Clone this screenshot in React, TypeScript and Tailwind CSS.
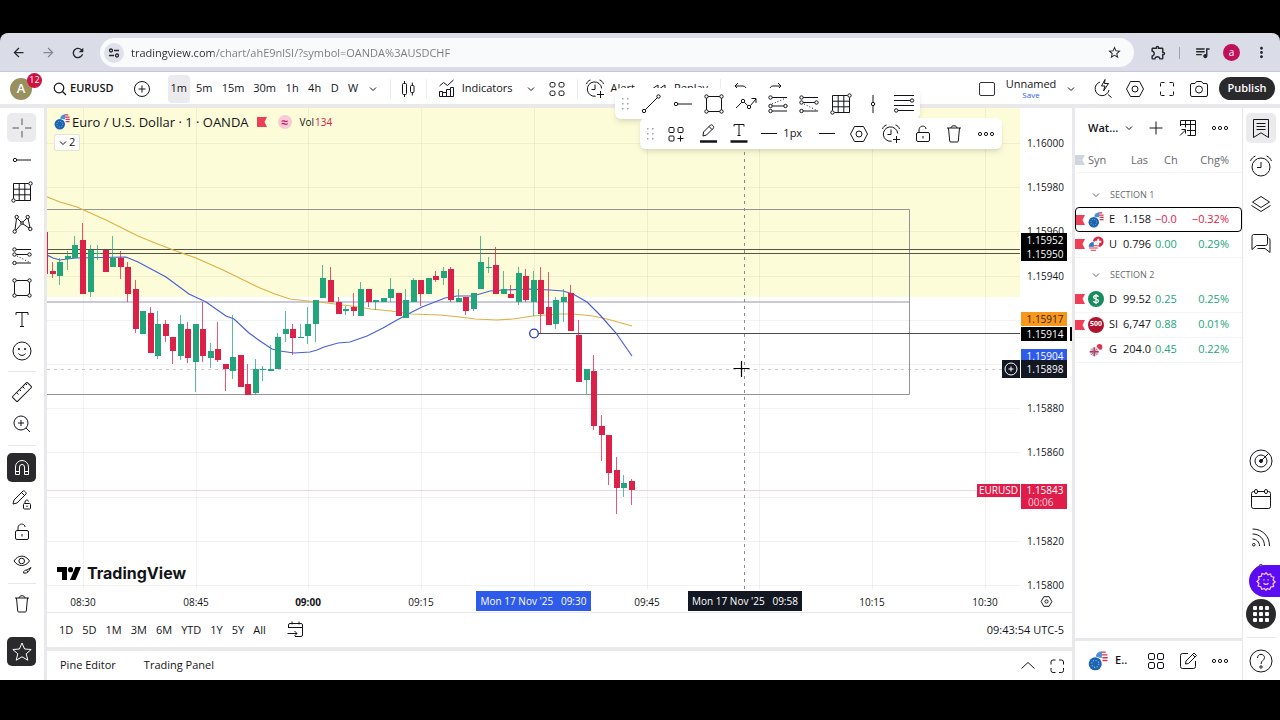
import type { ReactNode } from "react";
import clsx from "clsx";
import {
  MdArrowBack,
  MdArrowForward,
  MdMoreVert,
  MdOutlineExtension,
  MdQueueMusic,
  MdRefresh,
  MdStarOutline,
} from "react-icons/md";

/* ---------- icons ---------- */

const Icon = ({
  className = "h-7 w-7",
  children,
}: {
  className?: string;
  children: ReactNode;
}) => (
  <svg
    viewBox="0 0 28 28"
    fill="none"
    stroke="currentColor"
    strokeWidth="1"
    className={clsx("shrink-0", className)}
    aria-hidden="true"
  >
    {children}
  </svg>
);

const CrossIcon = () => (
  <Icon>
    <path d="M14 4.5V11M14 17v6.5M4.5 14H11M17 14h6.5" />
  </Icon>
);

const HLineIcon = () => (
  <Icon>
    <circle cx="7" cy="14" r="1.7" />
    <path d="M8.7 14H23" />
  </Icon>
);

const TrendIcon = () => (
  <Icon>
    <circle cx="7" cy="21" r="1.7" />
    <circle cx="21.5" cy="6.5" r="1.7" />
    <path d="M8.2 19.8 20.3 7.7" />
  </Icon>
);

const GridBoxIcon = () => (
  <Icon>
    <path d="M5.5 20.5v-15h15M22.5 7.5v15h-15M5.5 11.2h17M5.5 16.8h17M11.2 5.5v17M16.8 5.5v17" />
    <circle cx="22.5" cy="5.5" r="1.7" />
    <circle cx="5.5" cy="22.5" r="1.7" />
  </Icon>
);

const PatternIcon = () => (
  <Icon>
    <circle cx="6.7" cy="21.5" r="1.7" />
    <circle cx="8.7" cy="7" r="1.7" />
    <circle cx="19.7" cy="7" r="1.7" />
    <circle cx="22.3" cy="19" r="1.7" />
    <circle cx="14" cy="13" r="1.3" />
    <path d="M7 19.8 8.5 8.7M9.5 8.5 13 12M15 14l6 4M8 20.2l5.2-6M14.8 12l4-3.7M20.1 8.7l1.8 8.6" />
  </Icon>
);

const ParallelIcon = () => (
  <Icon>
    <circle cx="6.5" cy="7.5" r="1.7" />
    <circle cx="6.5" cy="12.5" r="1.7" />
    <circle cx="21.5" cy="12.5" r="1.7" />
    <circle cx="6.5" cy="21" r="1.7" />
    <path d="M8.2 7.5H23M8.2 12.5h11.6M8.2 21H23" />
    <path d="m9 14 12 6" strokeDasharray="1 2" />
  </Icon>
);

const ChannelIcon = () => (
  <Icon>
    <circle cx="6.5" cy="7.5" r="1.7" />
    <circle cx="6.5" cy="16" r="1.7" />
    <circle cx="21.5" cy="16" r="1.7" />
    <circle cx="6.5" cy="21" r="1.7" />
    <path d="M8.2 7.5H23M8.2 16h11.6M8.2 21H23" />
    <path d="m8 14 14-6" strokeDasharray="1 2" />
  </Icon>
);

const RectIcon = () => (
  <Icon>
    <path d="M8.2 6.5h11.6M8.2 21.5h11.6M6.5 8.2v11.6M21.5 8.2v11.6" />
    <circle cx="6.5" cy="6.5" r="1.7" />
    <circle cx="21.5" cy="6.5" r="1.7" />
    <circle cx="6.5" cy="21.5" r="1.7" />
    <circle cx="21.5" cy="21.5" r="1.7" />
  </Icon>
);

const TextIcon = () => (
  <Icon>
    <path d="M8 9V6.5h12V9M14 6.500v14M12 20.500h4" />
  </Icon>
);

const SmileIcon = () => (
  <Icon>
    <circle cx="14" cy="13" r="9" />
    <circle cx="11" cy="11" r="1" fill="currentColor" stroke="none" />
    <circle cx="17" cy="11" r="1" fill="currentColor" stroke="none" />
    <path d="M10.5 15.5c1.5 2.5 5.5 2.5 7 0" />
  </Icon>
);

const RulerIcon = () => (
  <Icon>
    <rect x="3.5" y="10.5" width="21" height="7" rx="1" transform="rotate(-45 14 14)" />
    <path d="m8.5 14.5 2 2M11.5 11.5l1.5 1.5M14.5 8.5l2 2M17.5 5.5l1.5 1.5" />
  </Icon>
);

const ZoomIcon = () => (
  <Icon>
    <circle cx="13" cy="13" r="7" />
    <path d="m18 18 4 4M13 10v6M10 13h6" />
  </Icon>
);

const MagnetIcon = () => (
  <Icon>
    <path d="M7.5 20.5V13a6.5 6.5 0 0 1 13 0v7.5h-4V13a2.5 2.5 0 0 0-5 0v7.5zM7.5 17.5h4M16.5 17.5h4" />
  </Icon>
);

const PencilLockIcon = () => (
  <Icon>
    <path d="m5 18 1-4 9-9c1-1 4 2 3 3l-9 9zM13.5 6.5l3 3" />
    <rect x="15.5" y="17.5" width="7" height="5.5" rx="1" />
    <path d="M17 17.5V16c0-2.5 3.5-2.5 3.5-.5M19 19.5v1.5" />
  </Icon>
);

const LockIcon = () => (
  <Icon>
    <rect x="7.5" y="12.5" width="13" height="9" rx="1.5" />
    <path d="M10 12.5V10c0-5 7-5 7-1M14 16v2.5" />
  </Icon>
);

const EyeIcon = () => (
  <Icon>
    <path d="M6 11c4-6.5 11.5-6.5 15.5 0-4 6-11.5 6-15.5 0z" />
    <circle cx="13.7" cy="11" r="2.8" />
    <path d="M15.5 23c0-2.5 2-3 3.500-3l4-2.500-2.500 4c-1 1.500-3 1.800-5 1.500zM18.500 20.500l1.500 1.500" />
  </Icon>
);

const TrashIcon = () => (
  <Icon>
    <path d="M7 8h14M11 8c0-3 6-3 6 0M8.5 8l1.2 13c0 .6.5 1 1 1h6.6c.5 0 1-.4 1-1L19.500 8" />
  </Icon>
);

const StarIcon = () => (
  <Icon>
    <path d="m14 5 2.600 6 6.600.5-5 4.300 1.600 6.400-5.800-3.400-5.800 3.400 1.600-6.400-5-4.300 6.600-.5z" />
  </Icon>
);

const ZigzagIcon = () => (
  <Icon>
    <circle cx="11" cy="11" r="1.7" />
    <circle cx="17" cy="17" r="1.7" />
    <path d="m4 18 5.8-5.7M12.3 12.2l3.5 3.5M18.3 15.7 24 9M19.5 8.5H24V13" />
  </Icon>
);

const VLineIcon = () => (
  <Icon>
    <circle cx="14" cy="14" r="1.7" />
    <path d="M14 5v7.3M14 15.7V23" />
  </Icon>
);

const LinesIcon = () => (
  <Icon>
    <path d="M4 5.5h20M4 10.5h16.3M4 15.5h20M8 20.5h16" />
    <circle cx="22" cy="10.5" r="1.7" />
    <circle cx="6.2" cy="20.5" r="1.7" />
  </Icon>
);

const TilesPlusIcon = () => (
  <Icon>
    <rect x="7" y="7.5" width="5" height="5" rx="1" />
    <rect x="16" y="7.5" width="5" height="5" rx="1" />
    <rect x="7" y="16" width="5" height="5" rx="1" />
    <path d="M18.5 15.5v6M15.5 18.5h6" />
  </Icon>
);

const TilesIcon = () => (
  <Icon>
    <rect x="7" y="7.5" width="5" height="4.5" rx="1.5" />
    <rect x="16" y="7.5" width="5" height="4.5" rx="1.5" />
    <rect x="7" y="16" width="5" height="4.5" rx="1.5" />
    <rect x="16" y="16" width="5" height="4.5" rx="1.5" />
  </Icon>
);

const PenColorIcon = () => (
  <Icon>
    <path d="m9 16 .5-4 7-7c1.5-1 4 1.5 3 3l-7 7zM15 6.5l3 3" />
    <path d="M6 21.5h17" strokeWidth="2.5" />
  </Icon>
);

const TextColorIcon = () => (
  <Icon>
    <path d="M9 6.5V4.5h10v2M14 4.5v11M12.5 15.5h3" />
    <path d="M5.5 21.5h17" strokeWidth="2.5" />
  </Icon>
);

const DashIcon = () => (
  <Icon>
    <path d="M6 13.5h16" />
  </Icon>
);

const HexIcon = () => (
  <Icon>
    <path d="M9.5 6.5h9l4 7.5-4 7.5h-9l-4-7.5z" />
    <circle cx="14" cy="14" r="3" />
  </Icon>
);

const AlertPlusIcon = () => (
  <Icon>
    <path d="M20.7 13.5a7.2 7.2 0 1 0-6 7.7M14 9.5v5h-3.5M5.5 9c.5-2 2-3.5 4-4M22.5 9c-.5-2-2-3.5-4-4M19.5 16v7M16 19.5h7" />
  </Icon>
);

const ClockIcon = () => (
  <Icon>
    <circle cx="14" cy="15" r="9" />
    <path d="M14 10v5.5h-4M3.5 9c1-2.5 2.5-4 5-5M24.5 9c-1-2.5-2.5-4-5-5" />
  </Icon>
);

const DotsIcon = () => (
  <Icon>
    <circle cx="8" cy="14" r="1.6" />
    <circle cx="14" cy="14" r="1.6" />
    <circle cx="20" cy="14" r="1.6" />
  </Icon>
);

const ChevronIcon = ({ className = "h-3 w-3" }: { className?: string }) => (
  <svg viewBox="0 0 12 12" fill="none" stroke="currentColor" className={className} aria-hidden="true">
    <path d="m3 4.5 3 3 3-3" />
  </svg>
);

const DragDots = () => (
  <svg viewBox="0 0 20 20" className="h-5 w-5 shrink-0 fill-gray-400" aria-hidden="true">
    {[5, 10, 15].map((y) => (
      <g key={y}>
        <rect x="7" y={y - 1} width="1.5" height="1.5" />
        <rect x="12" y={y - 1} width="1.5" height="1.5" />
      </g>
    ))}
  </svg>
);

const EuroUsd = ({ className = "h-4 w-4" }: { className?: string }) => (
  <svg viewBox="0 0 18 18" className={clsx("shrink-0", className)} aria-hidden="true">
    <circle cx="12" cy="6" r="5.5" fill="#fff" />
    <path d="M12 1h4M12 3.5h5.5M13 6h4.7M13 8.5h4.5" stroke="#d6314f" strokeWidth="1.3" />
    <path d="M7 5a5 5 0 0 1 5.5-4.5V6H7z" fill="#4a90d9" />
    <circle cx="6.5" cy="11.5" r="6.5" fill="#fff" />
    <circle cx="6.5" cy="11.5" r="5.9" fill="#1c63b0" />
    <circle cx="6.5" cy="11.5" r="3.2" fill="none" stroke="#8ec5ee" strokeWidth="1" strokeDasharray="1 1.5" />
  </svg>
);

const UsdChf = () => (
  <svg viewBox="0 0 18 18" className="h-4 w-4 shrink-0" aria-hidden="true">
    <circle cx="11.5" cy="6.5" r="6" fill="#e0243f" />
    <path d="M11.5 3v7M8 6.5h7" stroke="#fff" strokeWidth="2.2" />
    <circle cx="6" cy="12" r="6" fill="#fff" />
    <path d="M1 11h10M1 13.5h10M3 16h6" stroke="#d6314f" strokeWidth="1.3" />
    <path d="M.8 12A5.3 5.3 0 0 1 6.5 6.7V12z" fill="#2f78c9" />
  </svg>
);

const DollarBadge = () => (
  <svg viewBox="0 0 16 16" className="h-4 w-4 shrink-0" aria-hidden="true">
    <circle cx="8" cy="8" r="8" fill="#1a8a5f" />
    <path d="M10.5 5.8C10 4 5.7 4 5.7 6.2S10.5 7.6 10.5 10 6 12 5.5 10M8 3v10" fill="none" stroke="#fff" strokeWidth="1.3" />
  </svg>
);

const GbpJpy = () => (
  <svg viewBox="0 0 18 18" className="h-4 w-4 shrink-0" aria-hidden="true">
    <circle cx="13" cy="5.5" r="3.2" fill="#dc3553" />
    <circle cx="7" cy="11" r="6" fill="#fff" />
    <circle cx="7" cy="11" r="5" fill="#d5c9dc" />
    <path d="M2 11h10M7 6v10" stroke="#c92a48" strokeWidth="1.5" />
    <path d="m3.5 7.5 7 7M10.5 7.5l-7 7" stroke="#7a6f9a" strokeWidth=".8" />
  </svg>
);

const Flag = ({ className = "fill-[#ee3f56]" }: { className?: string }) => (
  <svg viewBox="0 0 10 10" className={clsx("h-[10px] w-[10px] shrink-0", className)} aria-hidden="true">
    <path d="M0 0h10L7.5 5l2.5 5H0z" />
  </svg>
);

/* ---------- chart data ---------- */

// [high, top, bottom, low, rising] for every minute from 08:25
const CANDLES: [number, number, number, number, 0 | 1][] = [
  [232, 232, 274, 274, 0],
  [262, 271, 274, 278, 0],
  [258, 262, 276, 285, 1],
  [251, 256, 259, 270, 1],
  [236, 245, 258, 258, 1],
  [223, 240, 294, 294, 0],
  [245, 250, 292, 297, 1],
  [245, 253, 254, 260, 1],
  [250, 250, 272, 272, 0],
  [236, 258, 267, 267, 1],
  [251, 258, 267, 279, 0],
  [262, 267, 294, 302, 0],
  [280, 289, 329, 333, 0],
  [311, 311, 334, 334, 1],
  [307, 313, 353, 353, 0],
  [311, 324, 356, 359, 1],
  [320, 324, 336, 342, 0],
  [337, 337, 351, 364, 0],
  [315, 324, 356, 360, 1],
  [322, 329, 358, 363, 0],
  [324, 324, 362, 392, 1],
  [302, 329, 356, 362, 0],
  [343, 351, 358, 368, 1],
  [322, 349, 360, 362, 0],
  [364, 364, 369, 391, 0],
  [315, 357, 371, 379, 1],
  [355, 355, 387, 387, 0],
  [364, 384, 395, 395, 0],
  [359, 369, 393, 395, 1],
  [366, 369, 370, 381, 1],
  [345, 369, 371, 371, 1],
  [333, 337, 369, 369, 1],
  [311, 329, 334, 342, 1],
  [324, 329, 338, 355, 0],
  [324, 337, 338, 338, 1],
  [307, 324, 336, 344, 1],
  [300, 300, 324, 342, 1],
  [265, 278, 298, 298, 1],
  [267, 280, 302, 302, 0],
  [297, 302, 314, 314, 0],
  [306, 309, 311, 315, 1],
  [293, 307, 311, 316, 0],
  [282, 289, 316, 316, 1],
  [289, 289, 302, 307, 0],
  [300, 300, 302, 310, 1],
  [298, 298, 302, 302, 1],
  [278, 289, 298, 302, 1],
  [293, 293, 316, 316, 0],
  [289, 300, 318, 318, 1],
  [278, 280, 302, 302, 1],
  [280, 280, 294, 306, 0],
  [278, 278, 294, 294, 1],
  [271, 276, 280, 282, 0],
  [267, 271, 278, 285, 1],
  [267, 269, 300, 302, 0],
  [289, 298, 302, 302, 1],
  [297, 297, 311, 315, 0],
  [293, 293, 309, 311, 1],
  [236, 262, 289, 289, 1],
  [257, 267, 268, 273, 1],
  [247, 265, 294, 294, 0],
  [271, 289, 294, 294, 1],
  [285, 294, 298, 298, 0],
  [267, 273, 302, 305, 1],
  [269, 276, 300, 302, 0],
  [271, 280, 302, 316, 1],
  [267, 280, 314, 333, 0],
  [272, 307, 325, 325, 0],
  [297, 300, 324, 329, 1],
  [289, 297, 302, 322, 1],
  [285, 293, 331, 331, 0],
  [320, 335, 382, 382, 0],
  [369, 369, 380, 394, 1],
  [355, 371, 426, 430, 0],
  [415, 426, 435, 461, 0],
  [435, 435, 473, 485, 0],
  [457, 470, 488, 514, 0],
  [475, 483, 488, 497, 1],
  [479, 481, 490, 505, 0],
];

const SLOW_MA =
  "45,196 60,202 77,207 106,220 138,236 155,243 176,251 196,258 223,270 260,288 275,294 290,299 308,301 327,303 351,306 371,309 391,311 411,314 440,315 460,317 475,319 497,320 513,319 533,316 560,314 573,314 593,316 607,319 632,326";
const FAST_MA =
  "45,254 53,258 60,260 67,259 76,258 126,257 138,262 153,270 166,277 189,294 206,302 226,316 234,319 249,333 260,341 272,349 280,351 294,353 310,352 317,350 324,347 338,343 350,342 367,336 383,328 397,320 412,312 422,307 445,298 457,296 473,296 490,291 503,290 530,289 550,290 563,291 573,294 587,302 600,315 616,333 632,356";

const LEFT = 47;
const TOP = 108;
const minuteX = (m: number) => 83 - LEFT + m * 7.515;
const priceY = (p: number) => Math.round(143 - TOP + (1.16 - p) * 221000);

const QUARTERS = [0, 15, 30, 45, 60, 75, 90, 105, 120];
const PRICES = [1.16, 1.1598, 1.1596, 1.1594, 1.1592, 1.159, 1.1588, 1.1586, 1.1584, 1.1582, 1.158];
const PRICE_LABELS = [1.16, 1.1598, 1.1596, 1.1594, 1.1588, 1.1586, 1.1582, 1.158];

const PRICE_TAGS = [
  { text: "1.15952", top: 125, className: "bg-black text-white" },
  { text: "1.15950", top: 139, className: "bg-black text-white" },
  { text: "1.15917", top: 204, className: "bg-[#f7981c] text-[#3b2200]" },
  { text: "1.15914", top: 219, className: "bg-black text-white" },
  { text: "1.15904", top: 241, className: "bg-[#2f5bea] text-white" },
];

const TIMES = [
  { m: 0, text: "08:30" },
  { m: 15, text: "08:45" },
  { m: 30, text: "09:00", bold: true },
  { m: 45, text: "09:15" },
  { m: 75, text: "09:45" },
  { m: 105, text: "10:15" },
  { m: 120, text: "10:30" },
];

/* ---------- pieces ---------- */

const BrowserBar = () => (
  <div className="flex h-[39px] shrink-0 items-center rounded-t-lg border-b border-[#c4c7d6] bg-[#dadde8] pt-px pr-[10px] pl-2 text-[#26272b]">
    <button aria-label="Back" className="flex w-5 justify-center"><MdArrowBack size={15} /></button>
    <button aria-label="Forward" className="ml-[10px] flex w-5 justify-center text-[#85878f]"><MdArrowForward size={15} /></button>
    <button aria-label="Reload" className="ml-[10px] flex w-5 justify-center"><MdRefresh size={16} /></button>
    <div className="ml-3 flex h-[29px] flex-1 items-center rounded-full bg-[#f8fafc] pr-3 pl-1">
      <button aria-label="Site information" className="flex h-5 w-5 items-center justify-center rounded-full bg-[#dfe2ea]">
        <svg viewBox="0 0 12 12" fill="none" stroke="currentColor" strokeWidth="1.3" className="h-3 w-3">
          <circle cx="3" cy="3.5" r="1.5" />
          <circle cx="9" cy="8.5" r="1.5" />
          <path d="M6 3.5h5M1 8.5h5" />
        </svg>
      </button>
      <input
        aria-label="Address"
        className="ml-[7px] h-5 flex-1 bg-[linear-gradient(to_right,#2a2b2f_83px,#77797f_83px)] bg-clip-text text-[11px] leading-5 text-transparent outline-none"
        defaultValue="tradingview.com/chart/ahE9nlSI/?symbol=OANDA%3AUSDCHF"
      />
      <button aria-label="Bookmark"><MdStarOutline size={15} /></button>
    </div>
    <div className="ml-4 flex items-center">
      <button aria-label="Extensions"><MdOutlineExtension size={17} /></button>
      <span className="ml-3 h-3 w-px bg-[#9fa3b3]" />
      <button aria-label="Media" className="ml-[14px]"><MdQueueMusic size={17} /></button>
      <button aria-label="Profile" className="ml-3 flex h-[17px] w-[17px] items-center justify-center rounded-full bg-[#c0105c] text-[10px] text-white">a</button>
      <button aria-label="Menu" className="ml-[13px]"><MdMoreVert size={17} /></button>
    </div>
  </div>
);

const INTERVALS = [
  { text: "1m", className: "w-[22px] rounded bg-[#ebebed] h-7" },
  { text: "5m", className: "w-[29px]" },
  { text: "15m", className: "w-[29px]" },
  { text: "30m", className: "w-[34px]" },
  { text: "1h", className: "w-[21px]" },
  { text: "4h", className: "w-6" },
  { text: "D", className: "w-4" },
  { text: "W", className: "w-[21px]" },
];

const Separator = () => <span className="h-5 w-px shrink-0 bg-[#ececee]" />;

const Header = () => (
  <header className="flex h-8 shrink-0 items-center bg-white pt-px text-[11px] font-medium">
    <button aria-label="Account" className="relative ml-[10px] flex h-[22px] w-[22px] items-center justify-center rounded-full bg-[#98905f] text-[13px] font-semibold text-white">
      A
      <span className="absolute -top-[5px] left-[17px] flex h-[15px] w-[15px] items-center justify-center rounded-full bg-[#d0103f] text-[9px] font-normal">12</span>
    </button>
    <button className="ml-[21px] flex items-center gap-[3px] font-semibold">
      <svg viewBox="0 0 14 14" fill="none" stroke="currentColor" strokeWidth="1.2" className="h-[14px] w-[14px]">
        <circle cx="6" cy="6" r="4.8" />
        <path d="m9.5 9.5 3.5 3.5" />
      </svg>
      EURUSD
    </button>
    <div className="flex flex-1 items-center">
      <button aria-label="Add symbol" className="ml-5 w-4">
        <svg viewBox="0 0 16 16" fill="none" stroke="currentColor" className="h-4 w-4">
          <circle cx="8" cy="8" r="7.5" />
          <path d="M8 4.5v7M4.5 8h7" />
        </svg>
      </button>
      <span className="ml-3"><Separator /></span>
      <div className="ml-[6px] flex items-center">
        {INTERVALS.map((i) => (
          <button key={i.text} className={clsx("flex items-center justify-center", i.className)}>{i.text}</button>
        ))}
        <button aria-label="More intervals" className="flex w-[18px] justify-center"><ChevronIcon /></button>
      </div>
      <span className="w-2" />
      <Separator />
      <button aria-label="Candles" className="flex w-[35px] justify-center">
        <Icon>
          <rect x="8.5" y="8.5" width="4" height="11" rx="1" />
          <rect x="16.5" y="10.5" width="3.5" height="7" rx="1" />
          <path d="M10.5 6v2.5M10.5 19.5V22M18.3 7.5v3M18.3 17.5v3" />
        </Icon>
      </button>
      <Separator />
      <button className="ml-[6px] flex items-center gap-px">
        <Icon>
          <path d="M6.5 21.5v-5h3v5zM9.5 21.5v-4h4v4zM13.5 21.5v-7h4v7zM17.5 21.5v-9h3v9zM6.5 11l4-3.5 4 3 6-5.5" />
        </Icon>
        Indicators
      </button>
      <button aria-label="Favorite indicators" className="ml-3"><ChevronIcon /></button>
      <button aria-label="Templates" className="ml-[6px]"><TilesIcon /></button>
      <span className="w-[6px]" />
      <Separator />
      <button className="ml-[3px] flex items-center gap-[2px]"><AlertPlusIcon />Alert</button>
      <button className="ml-[10px] flex items-center gap-px">
        <Icon>
          <path d="m13 10-6 4 6 4zM20 10l-6 4 6 4z" />
        </Icon>
        Replay
      </button>
      <span className="w-3" />
      <Separator />
      <button aria-label="Undo" className="ml-[6px]">
        <Icon><path d="m11 8-3 3 3 3M8 11h8c4 0 4 6 0 6" /></Icon>
      </button>
      <button aria-label="Redo" className="ml-[6px]">
        <Icon><path d="m17 8 3 3-3 3M20 11h-8c-4 0-4 6 0 6" /></Icon>
      </button>
    </div>
    <button aria-label="Layout" className="h-[14px] w-4 rounded-xs border border-[#333]" />
    <button className="ml-[10px] flex w-[52px] flex-col items-center">
      <span className="leading-3">Unnamed</span>
      <span className="text-[8px] leading-[10px] font-normal text-[#2f5bea]">Save</span>
    </button>
    <button aria-label="Layouts" className="ml-2"><ChevronIcon /></button>
    <div className="ml-3 flex gap-1">
      <button aria-label="Quick search">
        <Icon>
          <path d="M11 7a7 7 0 1 0 9 8M19 19.5l3.5 3M16 4.5 12.500 11H16l-1.500 5 5-7.500h-4z" />
        </Icon>
      </button>
      <button aria-label="Settings"><HexIcon /></button>
      <button aria-label="Fullscreen">
        <Icon><path d="M7.5 11.5v-3a1 1 0 0 1 1-1h3M16.5 7.5h3a1 1 0 0 1 1 1v3M20.5 16.5v3a1 1 0 0 1-1 1h-3M11.5 20.5h-3a1 1 0 0 1-1-1v-3" /></Icon>
      </button>
      <button aria-label="Snapshot">
        <Icon>
          <path d="M7 8.5h3l1.5-2h5l1.500 2h3a1.500 1.500 0 0 1 1.500 1.500v10a1.500 1.500 0 0 1-1.500 1.500H7A1.500 1.500 0 0 1 5.500 20V10A1.500 1.500 0 0 1 7 8.500z" />
          <circle cx="14" cy="14.5" r="3.5" />
        </Icon>
      </button>
    </div>
    <button className="mr-[5px] ml-[6px] h-[23px] w-14 rounded-full bg-[#2a2a2c] font-semibold text-white">Publish</button>
  </header>
);

const ToolButton = ({ label, dark, active, children }: { label: string; dark?: boolean; active?: boolean; children: ReactNode }) => (
  <button
    aria-label={label}
    className={clsx(
      "flex h-[29px] w-[29px] shrink-0 items-center justify-center rounded-[5px]",
      dark && "bg-[#2a2a2c] text-white",
      active && "bg-[#ebebed] text-[#55565a]",
    )}
  >
    {children}
  </button>
);

const DrawingTools = () => (
  <nav className="flex w-11 shrink-0 flex-col items-center bg-white pt-[5px] pr-px pb-[14px]">
    <div className="flex flex-col gap-[3px]">
      <ToolButton label="Cross" active><CrossIcon /></ToolButton>
      <ToolButton label="Horizontal ray"><HLineIcon /></ToolButton>
      <ToolButton label="Gann box"><GridBoxIcon /></ToolButton>
      <ToolButton label="Patterns"><PatternIcon /></ToolButton>
      <ToolButton label="Long position"><ParallelIcon /></ToolButton>
      <ToolButton label="Rectangle"><RectIcon /></ToolButton>
      <ToolButton label="Text"><TextIcon /></ToolButton>
      <ToolButton label="Icons"><SmileIcon /></ToolButton>
    </div>
    <span className="my-[5px] h-px w-7 shrink-0 bg-gray-200" />
    <div className="flex flex-col gap-[3px]">
      <ToolButton label="Measure"><RulerIcon /></ToolButton>
      <ToolButton label="Zoom in"><ZoomIcon /></ToolButton>
    </div>
    <span className="my-[7px] h-px w-7 shrink-0 bg-gray-200" />
    <div className="flex flex-col gap-[3px]">
      <ToolButton label="Magnet" dark><MagnetIcon /></ToolButton>
      <ToolButton label="Stay in drawing mode"><PencilLockIcon /></ToolButton>
      <ToolButton label="Lock drawings"><LockIcon /></ToolButton>
      <ToolButton label="Hide drawings"><EyeIcon /></ToolButton>
    </div>
    <span className="my-[5px] h-px w-7 shrink-0 bg-gray-200" />
    <ToolButton label="Remove"><TrashIcon /></ToolButton>
    <div className="mt-auto">
      <ToolButton label="Favorites" dark><StarIcon /></ToolButton>
    </div>
  </nav>
);

const Plot = () => (
  <svg className="absolute inset-0 h-full w-full" aria-label="EURUSD price chart">
    <rect width="100%" height="189" fill="#fcfcd8" />
    {QUARTERS.map((m) => (
      <path key={m} d={`M${Math.round(minuteX(m)) + 0.5} 0v482`} stroke="#000" strokeOpacity=".05" />
    ))}
    {PRICES.map((p) => (
      <line key={p} x1="0" x2="100%" y1={priceY(p) + 0.5} y2={priceY(p) + 0.5} stroke="#000" strokeOpacity=".05" />
    ))}
    <line x1="0" x2="100%" y1="382.5" y2="382.5" stroke="#e4d8dc" />
    <line x1="0" x2="100%" y1="261.5" y2="261.5" stroke="#cbcbce" strokeDasharray="3 4" />

    <path d="M0 101.5h862.5v185H0" fill="none" stroke="#949498" />
    <path d="M0 194h862" stroke="#b8b8c4" strokeWidth="1.5" />
    <line x1="0" x2="100%" y1="141.5" y2="141.5" stroke="#55554a" />
    <line x1="0" x2="100%" y1="145.5" y2="145.5" stroke="#55554a" />
    <line x1="487" x2="100%" y1="225.5" y2="225.5" stroke="#4a4a4a" />

    <g transform={`translate(${-LEFT} ${-TOP})`}>
      <polyline points={SLOW_MA} fill="none" stroke="#dfb044" strokeWidth="1.2" />
      <polyline points={FAST_MA} fill="none" stroke="#4a5fd8" strokeWidth="1.2" />
    </g>

    {CANDLES.map(([high, top, bottom, low, up], i) => {
      const x = Math.round(minuteX(i - 5));
      return (
        <g key={i} fill={up ? "#22a57b" : "#dc2148"}>
          <rect x={x - 1} y={high - TOP} width="1" height={low - high} opacity=".75" />
          <rect x={x - 3} y={top - TOP} width="6" height={Math.max(bottom - top, 1)} />
        </g>
      );
    })}

    <circle cx="487" cy="225.5" r="4.3" fill="#fff" stroke="#2b3cc4" strokeWidth="1.3" />
    <path d="M697.5 30v452" stroke="#8a8a8e" strokeDasharray="3 4" />
    <path d="M694.5 253v16M686.5 260.5h16" stroke="#000" strokeWidth="1.2" />
  </svg>
);

const ChartLegend = () => (
  <div className="relative flex flex-col items-start pt-[5px] pl-[7px]">
    <div className="flex items-center text-[13px] leading-[18px]">
      <EuroUsd />
      <span className="ml-[2px] font-medium">Euro / U.S. Dollar · 1 · OANDA</span>
      <span className="ml-2"><Flag /></span>
      <span className="ml-[11px] flex h-[14px] w-[14px] items-center justify-center rounded-full bg-[#f9c9d6] text-[13px] font-semibold text-[#c2185b]">≈</span>
      <span className="ml-2 text-[10px]">Vol<span className="ml-px text-[#dc2148]">134</span></span>
    </div>
    <button className="mt-[3px] flex h-[17px] items-center rounded-xs border border-[#e4e4cf] bg-white pr-1 pl-[2px] text-[11px]">
      <ChevronIcon /> 2
    </button>
  </div>
);

const PriceAxis = () => (
  <div className="relative w-[52px] shrink-0 bg-white text-[10px] leading-[14px]">
    {PRICE_LABELS.map((p) => (
      <span key={p} className="absolute left-0 w-[51px] text-center" style={{ top: priceY(p) - 7 }}>{p.toFixed(5)}</span>
    ))}
    {PRICE_TAGS.map((t) => (
      <span key={t.text} className={clsx("absolute left-px w-[46px] pl-[2px] text-center font-medium", t.className)} style={{ top: t.top }}>
        {t.text}
      </span>
    ))}
    <span className="absolute top-[219px] right-0 h-[14px] w-[2px] bg-black" />
    <span className="absolute top-[252px] left-px w-[46px] bg-[#131722] py-[2px] pl-[2px] text-center font-medium text-white">1.15898</span>
    <span className="absolute top-[376px] left-px flex w-[46px] flex-col items-center bg-[#e01d4a] pb-px leading-3 text-white">
      <span className="pl-[2px] font-medium">1.15843</span>
      <span className="w-full pl-[7px] text-[#ffd0da]">00:06</span>
    </span>
  </div>
);

const TimeAxis = () => (
  <div className="flex h-[23px] shrink-0 border-b border-[#e8e8ea] text-[10px] leading-5">
    <div className="relative flex-1 overflow-hidden">
      {TIMES.map((t) => (
        <span
          key={t.text}
          className={clsx("absolute top-[2px] w-10 -translate-x-1/2 text-center", t.bold && "font-bold")}
          style={{ left: Math.round(minuteX(t.m)) }}
        >
          {t.text}
        </span>
      ))}
      <span className="absolute top-px left-[429px] h-5 w-[115px] bg-[#2f5bea] text-center whitespace-pre text-white">Mon 17 Nov '25   09:30</span>
      <span className="absolute top-px left-[641px] h-5 w-[114px] bg-[#131722] text-center whitespace-pre text-white">Mon 17 Nov '25   09:58</span>
    </div>
    <button aria-label="Axis settings" className="flex w-[52px] items-center justify-center">
      <svg viewBox="0 0 28 28" fill="none" stroke="currentColor" strokeWidth="1.8" className="h-[15px] w-[15px]">
        <path d="M9 5h10l5 9-5 9H9l-5-9z" />
        <circle cx="14" cy="14" r="3" />
      </svg>
    </button>
  </div>
);

const RANGES = ["1D", "5D", "1M", "3M", "6M", "YTD", "1Y", "5Y", "All"];

const ChartPanel = () => (
  <section className="flex min-w-0 flex-1 flex-col gap-1">
    <div className="flex min-h-0 flex-1 flex-col bg-white">
      <div className="flex min-h-0 flex-1">
        <div className="relative flex-1 overflow-hidden">
          <Plot />
          <ChartLegend />
          <div className="absolute bottom-[7px] left-[10px] flex items-center gap-[6px] font-['Inter',sans-serif] text-[16px] leading-5 font-bold">
            <svg viewBox="0 0 24 13" className="h-[13px] w-6" aria-hidden="true">
              <path d="M0 0h10v13H5V5H0z" />
              <circle cx="13.5" cy="2.7" r="2.6" />
              <path d="M18.5 0H24l-5.5 13H13z" />
            </svg>
            TradingView
          </div>
          <button aria-label="Add order" className="absolute top-[252px] right-0 flex h-[18px] w-[18px] items-center justify-center bg-[#131722] text-white">
            <svg viewBox="0 0 14 14" fill="none" stroke="currentColor" className="h-[14px] w-[14px]">
              <circle cx="7" cy="7" r="6" />
              <path d="M7 4.5v5M4.5 7h5" />
            </svg>
          </button>
          <span className="absolute top-[376px] right-0 w-[43px] bg-[#e01d4a] text-center text-[10px] leading-[13px] text-white">EURUSD</span>
        </div>
        <PriceAxis />
      </div>
      <TimeAxis />
      <div className="flex h-[34px] shrink-0 items-center pr-2 text-[11px]">
        <div className="flex gap-[9px] pl-3">
          {RANGES.map((r) => (
            <button key={r}>{r}</button>
          ))}
        </div>
        <button aria-label="Go to" className="ml-4">
          <Icon>
            <path d="M6.5 12V9A1.5 1.5 0 0 1 8 7.5h11A1.5 1.5 0 0 1 20.5 9v10a1.5 1.5 0 0 1-1.5 1.5h-6M6.5 11.5h14M10 5.5v3M17 5.5v3M5.5 17.5H15M12.5 15l2.5 2.5-2.5 2.5" />
          </Icon>
        </button>
        <button className="ml-auto">09:43:54 UTC-5</button>
      </div>
    </div>
    <footer className="flex h-[29px] shrink-0 items-center bg-white pr-px text-[11px] font-medium">
      <button className="ml-[13px]">Pine Editor</button>
      <button className="ml-7">Trading Panel</button>
      <button aria-label="Open panel" className="ml-auto">
        <Icon><path d="m7.5 16.5 6.5-6 6.5 6" /></Icon>
      </button>
      <button aria-label="Maximize panel" className="ml-px">
        <Icon><path d="M8 12.5V10a2 2 0 0 1 2-2h2.5M16 8h2.5a2 2 0 0 1 2 2v2.5M20.5 16v2.5a2 2 0 0 1-2 2H16M12.5 20.5H10a2 2 0 0 1-2-2V16" /></Icon>
      </button>
    </footer>
  </section>
);

const SECTIONS = [
  {
    name: "SECTION 1",
    headClass: "h-[35px] pt-[10px]",
    rows: [
      { icon: <EuroUsd />, name: "E", last: "1.158", chg: "−0.0", pct: "−0.32%", down: true, flag: true, selected: true },
      { icon: <UsdChf />, name: "U", last: "0.796", chg: "0.00", pct: "0.29%", flag: true },
    ],
  },
  {
    name: "SECTION 2",
    headClass: "h-[30px] pt-[5px]",
    rows: [
      { icon: <DollarBadge />, name: "D", last: "99.52", chg: "0.25", pct: "0.25%", flag: true },
      {
        icon: <span className="flex h-4 w-4 shrink-0 items-center justify-center rounded-full bg-[#b3122f] text-[7px] font-bold text-white">500</span>,
        name: "SI",
        last: "6,747",
        chg: "0.88",
        pct: "0.01%",
        flag: true,
      },
      { icon: <GbpJpy />, name: "G", last: "204.0", chg: "0.45", pct: "0.22%" },
    ],
  },
];

const Watchlist = () => (
  <aside className="flex w-[167px] shrink-0 flex-col gap-[3px]">
    <div className="flex-1 bg-white">
      <div className="flex h-10 items-center pl-[13px]">
        <button className="flex items-center gap-[5px] text-[11px] font-semibold">Wat... <ChevronIcon /></button>
        <span className="ml-auto flex gap-1">
          <button aria-label="Add symbol"><Icon><path d="M14 7.5v13M7.5 14h13" /></Icon></button>
          <button aria-label="Advanced view">
            <Icon><path d="M6.5 12V6.5h15v15h-8M6.5 10.5h15M11.5 6.5v7M16.5 6.5v15M13 16.5h8.500M6 21.500l5.500-5.500M7.500 15.500h4v4" /></Icon>
          </button>
          <button aria-label="More" className="mr-2"><DotsIcon /></button>
        </span>
      </div>
      <table className="w-full table-fixed text-[11px]">
        <colgroup>
          <col className="w-[34px]" />
          <col className="w-[11px]" />
          <col className="w-[34px]" />
          <col className="w-[26px]" />
          <col />
        </colgroup>
        <thead>
          <tr className="h-6 border-b border-gray-100 text-[#66686e]">
            <th colSpan={2} className="p-0 text-left font-normal">
              <div className="flex items-center gap-[3px]"><Flag className="fill-gray-300" />Syn</div>
            </th>
            <th className="overflow-hidden p-0 pr-[6px] text-right font-normal">Las</th>
            <th className="overflow-hidden p-0 pl-[10px] text-left font-normal">Ch</th>
            <th className="p-0 pr-[13px] text-right font-normal">Chg%</th>
          </tr>
        </thead>
        {SECTIONS.map((s) => (
          <tbody key={s.name}>
            <tr>
              <td colSpan={5} className={clsx("p-0 pl-[15px] text-[9px] text-[#66686e]", s.headClass)}>
                <button className="flex items-center gap-2"><ChevronIcon /> {s.name}</button>
              </td>
            </tr>
            {s.rows.map((r) => (
              <tr
                key={r.name}
                className={clsx(
                  "h-[25px]",
                  r.selected ? "rounded outline-[1.5px] -outline-offset-1 outline-black" : "border-b border-gray-100",
                )}
              >
                <td className="p-0">
                  <div className="flex items-center gap-[3px]">
                    {r.flag ? <Flag /> : <span className="w-[10px]" />}
                    {r.icon}
                  </div>
                </td>
                <td className="overflow-hidden p-0 text-clip whitespace-nowrap">{r.name}</td>
                <td className="overflow-hidden p-0 pl-[3px] text-clip whitespace-nowrap">{r.last}</td>
                <td className={clsx("overflow-hidden p-0 pl-px text-clip whitespace-nowrap", r.down ? "text-[#dc2148]" : "text-[#22a57b]")}>{r.chg}</td>
                <td className={clsx("p-0 pr-[13px] text-right", r.down ? "text-[#dc2148]" : "text-[#22a57b]")}>{r.pct}</td>
              </tr>
            ))}
          </tbody>
        ))}
      </table>
    </div>
    <div className="flex h-[39px] shrink-0 items-center bg-white pl-[13px] text-[11px] font-semibold">
      <EuroUsd className="h-5 w-5" />
      <span className="ml-[7px]">E..</span>
      <span className="ml-auto flex gap-1">
        <button aria-label="Layout grid">
          <Icon>
            <rect x="6.5" y="6.5" width="6" height="6" rx="1.5" />
            <rect x="15.5" y="6.5" width="6" height="6" rx="1.5" />
            <rect x="6.5" y="15.5" width="6" height="6" rx="1.5" />
            <rect x="15.5" y="15.5" width="6" height="6" rx="1.5" />
          </Icon>
        </button>
        <button aria-label="Note">
          <Icon><path d="M14 6.5H8.5a2 2 0 0 0-2 2v11a2 2 0 0 0 2 2h11a2 2 0 0 0 2-2V14M11.5 17l.5-3 8-8 2.5 2.5-8 8zM18.5 7.5 21 10" /></Icon>
        </button>
        <button aria-label="More" className="mr-2"><DotsIcon /></button>
      </span>
    </div>
  </aside>
);

const RailButton = ({ label, active, children }: { label: string; active?: boolean; children: ReactNode }) => (
  <button aria-label={label} className={clsx("flex h-[30px] w-[30px] items-center justify-center rounded-[5px]", active && "bg-[#ebebed]")}>
    {children}
  </button>
);

const RightRail = () => (
  <nav className="relative -ml-[3px] flex w-[38px] shrink-0 flex-col items-center border-l border-gray-200 bg-white pt-[5px] pr-px pb-1">
    <div className="flex flex-col gap-2">
      <RailButton label="Watchlist" active>
        <Icon><path d="M6.5 5.5h15v18L14 18.8l-7.5 4.7zM9.5 9.5h9M9.5 12.5h9M9.5 15.5h9" /></Icon>
      </RailButton>
      <RailButton label="Alerts"><ClockIcon /></RailButton>
      <RailButton label="Object tree">
        <Icon><path d="M14 6.5 22.5 12 14 17.5 5.5 12zM4.5 15.5l9.5 6 9.5-6" /></Icon>
      </RailButton>
      <RailButton label="Chat">
        <Icon><path d="M6.5 6.5h12a2 2 0 0 1 2 2v7a2 2 0 0 1-2 2h-9l-4.5 4v-13a2 2 0 0 1 1.500-2zM10.500 20.500H18l5 4V12c0-1-.5-1.500-1.500-2" /></Icon>
      </RailButton>
    </div>
    <div className="mt-auto flex flex-col gap-2">
      <RailButton label="Screeners">
        <Icon>
          <circle cx="14" cy="13" r="11" />
          <circle cx="14" cy="13" r="6" />
          <circle cx="14" cy="13" r="1.5" fill="currentColor" />
          <path d="m14 13 7.5-7.5" />
        </Icon>
      </RailButton>
      <RailButton label="Calendar">
        <Icon>
          <rect x="4.5" y="5.5" width="19" height="17" rx="2" />
          <path d="M4.5 10.5h19" />
          <rect x="7.5" y="3.5" width="3" height="4" rx="1.5" fill="#fff" />
          <rect x="17.5" y="3.5" width="3" height="4" rx="1.5" fill="#fff" />
        </Icon>
      </RailButton>
      <RailButton label="Streams">
        <Icon>
          <circle cx="6.8" cy="20.7" r="1.3" />
          <path d="M5.5 15c4 0 7 3 7 7M5.5 10c7 0 12 5 12 12M5.5 5c10 0 17 7 17 17" />
        </Icon>
      </RailButton>
      <RailButton label="Notifications">
        <Icon><path d="M12 4c.5-2 3.5-2 4 0M7 20V11c0-9 14-9 14 0v9z" /></Icon>
      </RailButton>
      <button aria-label="Apps" className="flex h-[30px] w-[30px] items-center justify-center rounded-full bg-[#2a2a2c]">
        <svg viewBox="0 0 16 16" className="h-4 w-4 fill-white">
          {[0, 6, 12].map((y) => [0, 6, 12].map((x) => <rect key={`${x}-${y}`} x={x} y={y} width="4" height="4" rx="1" />))}
        </svg>
      </button>
    </div>
    <span className="my-2 h-px w-7 bg-gray-200" />
    <RailButton label="Help">
      <Icon>
        <circle cx="14" cy="14" r="11" />
        <path d="M10.5 11c0-5 7-4.5 7-.5 0 3-3.5 3-3.5 6.5" />
        <circle cx="14" cy="20" r="1.2" />
      </Icon>
    </RailButton>
    <button aria-label="Assistant" className="absolute right-0 bottom-[83px] flex h-8 w-[31px] items-center justify-center rounded-l-full bg-[#5b0cf0] text-[#f6c8ff]">
      <svg viewBox="0 0 24 24" fill="none" stroke="currentColor" strokeWidth="1.5" className="ml-[2px] h-5 w-5">
        <path d="m12 2 2.2 2.5 3.300-1 .8 3.200 3.200.8-1 3.300L23 13l-2.500 2.200.6 3.300-3.300.7-1.300 3-3-1.200L12 23l-2-2-3.200 1-1-3.200-3.300-.8 1-3.300L1.200 12.500l2.500-2.200-.7-3.300 3.300-.7.8-3.300 3.200 1z" />
        <path d="M9.5 10v1.5M14.5 10v1.5M9 14.5c1.5 2 4.5 2 6 0" />
      </svg>
    </button>
  </nav>
);

const Floating = ({ className, children }: { className: string; children: ReactNode }) => (
  <div className={clsx("absolute flex h-[31px] items-center rounded-md bg-white shadow-md", className)}>
    <DragDots />
    {children}
  </div>
);

const Tool = ({ label, children }: { label: string; children: ReactNode }) => (
  <button aria-label={label} className="flex min-w-0 flex-1 justify-center">{children}</button>
);

const FloatingToolbars = () => (
  <>
    <Floating className="top-[88px] left-[615px] w-[305px]">
      <Tool label="Trend line"><TrendIcon /></Tool>
      <Tool label="Horizontal ray"><HLineIcon /></Tool>
      <Tool label="Rectangle"><RectIcon /></Tool>
      <Tool label="Path"><ZigzagIcon /></Tool>
      <Tool label="Long position"><ChannelIcon /></Tool>
      <Tool label="Short position"><ParallelIcon /></Tool>
      <Tool label="Gann box"><GridBoxIcon /></Tool>
      <Tool label="Vertical line"><VLineIcon /></Tool>
      <Tool label="Fib retracement"><LinesIcon /></Tool>
    </Floating>
    <Floating className="top-[118px] left-[640px] w-[362px]">
      <Tool label="Templates"><TilesPlusIcon /></Tool>
      <Tool label="Line color"><PenColorIcon /></Tool>
      <Tool label="Text color"><TextColorIcon /></Tool>
      <button className="flex w-14 shrink-0 items-center text-[11px] font-medium"><DashIcon />1px</button>
      <Tool label="Line style"><DashIcon /></Tool>
      <Tool label="Settings"><HexIcon /></Tool>
      <Tool label="Add alert"><AlertPlusIcon /></Tool>
      <Tool label="Lock"><LockIcon /></Tool>
      <Tool label="Remove"><TrashIcon /></Tool>
      <Tool label="More"><DotsIcon /></Tool>
    </Floating>
  </>
);

const App = () => {
  return (
    <div className="relative flex h-screen flex-col overflow-hidden bg-black pt-[33px] pb-10 font-['Open_Sans',sans-serif] text-[#131417]">
      <BrowserBar />
      <Header />
      <main className="flex min-h-0 flex-1 gap-[3px] bg-[#e9e9eb] pt-1">
        <DrawingTools />
        <ChartPanel />
        <Watchlist />
        <RightRail />
      </main>
      <FloatingToolbars />
    </div>
  );
};

export default App;
